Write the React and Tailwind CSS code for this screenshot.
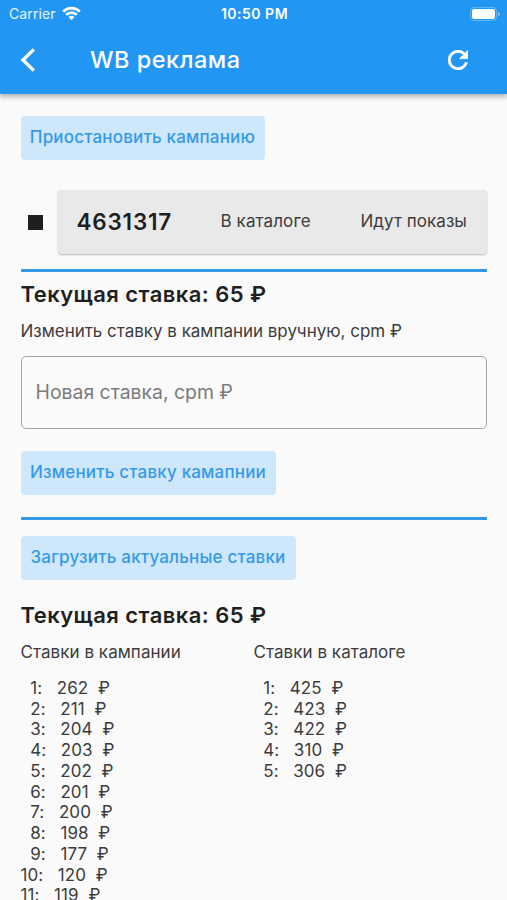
import { useState } from "react";

const campaignBids = [262, 211, 204, 203, 202, 201, 200, 198, 177, 120, 119];
const catalogBids = [425, 423, 422, 310, 306];

function StatusBar() {
  return (
    <div className="grid h-[27px] grid-cols-3 items-center pl-[9px] pr-[7px]">
      <div className="flex items-center gap-[6px]">
        <span className="text-[14px] tracking-[0.1px] text-white/90">Carrier</span>
        <svg width="19" height="15" viewBox="0 0 19 15" fill="none" stroke="white" strokeWidth="2.6">
          <path d="M1.2 5.6a11.7 11.7 0 0 1 16.6 0" />
          <path d="M4.2 8.8a7.5 7.5 0 0 1 10.6 0" />
          <path d="M9.5 14.2 6.5 11.1a4.3 4.3 0 0 1 6 0z" fill="white" stroke="none" />
        </svg>
      </div>
      <span className="text-center text-[14px] font-semibold tracking-[0.5px]">10:50 PM</span>
      <div className="flex items-center justify-end gap-px">
        <div className="h-[14px] w-[27px] rounded-[4px] border border-white/30 p-px">
          <div className="h-full w-full rounded-[2px] bg-white" />
        </div>
        <div className="h-1 w-[2px] rounded-r-full bg-white/40" />
      </div>
    </div>
  );
}

function AppBar() {
  return (
    <header className="relative h-[94px] bg-[#2196f3] text-white shadow-[0_3px_5px_rgba(0,0,0,0.28)]">
      <StatusBar />
      <div className="flex h-[66px] items-center pl-[20px] pr-[39px]">
        <button>
          <svg width="16" height="24" viewBox="0 0 16 24" fill="none" stroke="white" strokeWidth="3.4">
            <path d="M13.8 1.4 3 12l10.8 10.6" />
          </svg>
        </button>
        <h1 className="ml-[54px] flex-1 text-[23.5px] font-medium tracking-[0.5px]">WB реклама</h1>
        <button>
          <svg width="20" height="20" viewBox="4 4 16 16" fill="white" stroke="white" strokeWidth="0.4">
            <path d="M17.65 6.35A7.958 7.958 0 0 0 12 4a8 8 0 1 0 7.73 10h-2.08A6 6 0 1 1 12 6c1.66 0 3.14.69 4.22 1.78L13 11h7V4z" />
          </svg>
        </button>
      </div>
    </header>
  );
}

function ActionButton({ children, className }) {
  return (
    <button
      className={`h-[44px] self-start whitespace-nowrap rounded-[4px] bg-[#cfe7fb] pt-px text-[17px] font-medium tracking-[0.18px] text-[#3399ec] ${className}`}
    >
      {children}
    </button>
  );
}

function BidList({ title, bids }) {
  return (
    <div className="flex-1">
      <h3 className="text-[17px] leading-[21px] tracking-[0.05px]">{title}</h3>
      <ol className="mt-[14.5px]">
        {bids.map((bid, i) => (
          <li key={i} className="h-[20.78px] whitespace-pre text-[17px] leading-[20.78px] tracking-[0.08px]">
            {`${i < 9 ? "  " : ""}${i + 1}:   ${bid}  ₽`}
          </li>
        ))}
      </ol>
    </div>
  );
}

export default function App() {
  const [bid, setBid] = useState("");

  return (
    <div className="h-[900px] w-[507px] overflow-hidden bg-[#fafafa] font-['Inter','Liberation_Sans',sans-serif] text-[#3c3c3c]">
      <AppBar />
      <main className="flex flex-col px-[20.5px] pt-[21.5px]">
        <ActionButton className="w-[244px]">Приостановить кампанию</ActionButton>

        {/* Campaign row */}
        <div className="mt-[30.5px] flex items-center">
          <div className="ml-[7px] mr-[15px] size-[15px] bg-[#1f1f1f]" />
          <div className="flex h-[64px] flex-1 items-center rounded-[4px] bg-[#e9e9e9] pl-[19px] shadow-[0_1px_2px_rgba(0,0,0,0.28)]">
            <span className="w-[144px] text-[22.5px] font-semibold tracking-[0.8px] text-[#1f1f1f]">4631317</span>
            <span className="w-[140px] text-[17px] tracking-[0.1px]">В каталоге</span>
            <span className="whitespace-nowrap text-[17px] tracking-[0.05px]">Идут показы</span>
          </div>
        </div>

        <hr className="mt-[14.5px] border-0 border-t-[3px] border-[#3399e6]" />

        <h2 className="mt-[8px] text-[22px] font-semibold leading-[28px] tracking-[0.43px] text-[#1f1f1f]">
          Текущая ставка: 65 ₽
        </h2>
        <p className="mt-[13px] text-[17px] leading-[21px] tracking-[-0.02px]">
          Изменить ставку в кампании вручную, cpm ₽
        </p>
        <input
          value={bid}
          onChange={(e) => setBid(e.target.value)}
          placeholder="Новая ставка, cpm ₽"
          className="mt-[14px] h-[73px] rounded-[5px] border border-[#a6a6a6] bg-transparent px-[14px] text-[19.4px] outline-none placeholder:text-[#7b7b7b]"
        />
        <ActionButton className="mt-[22px] w-[255px]">Изменить ставку камапнии</ActionButton>

        <hr className="mt-[22px] border-0 border-t-[3px] border-[#3399e6]" />

        <ActionButton className="mt-[16px] w-[275px]">Загрузить актуальные ставки</ActionButton>
        <h2 className="mt-[21px] text-[22px] font-semibold leading-[28px] tracking-[0.43px] text-[#1f1f1f]">
          Текущая ставка: 65 ₽
        </h2>
        <div className="mt-[13.75px] flex">
          <BidList title="Ставки в кампании" bids={campaignBids} />
          <BidList title="Ставки в каталоге" bids={catalogBids} />
        </div>
      </main>
    </div>
  );
}
